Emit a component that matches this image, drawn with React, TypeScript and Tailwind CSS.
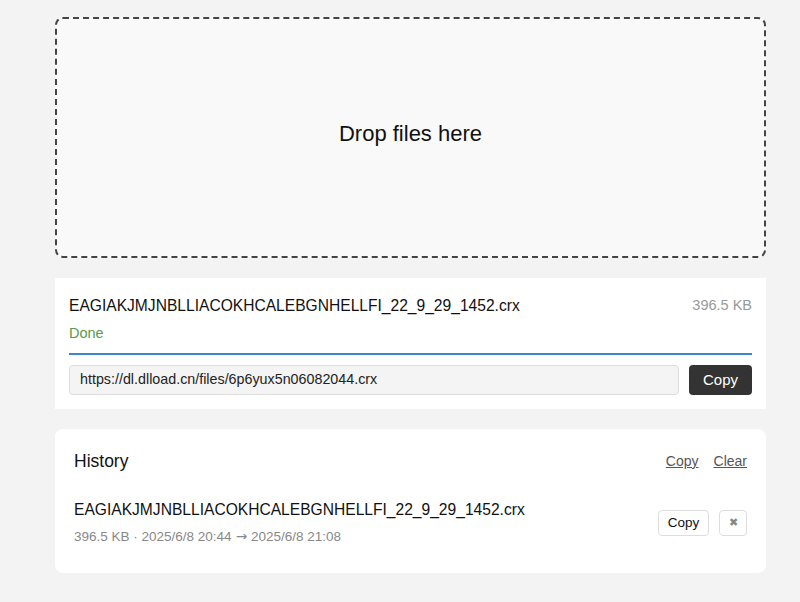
import React from "react";

export default function App() {
  const font = { fontFamily: '"Liberation Sans", Arial, sans-serif' };
  return (
    <div className="min-h-[602px] w-full bg-[#f3f3f3] pt-[17px]" style={font}>
      <div className="ml-[55px] flex w-[711px] flex-col">
        <div className="flex h-[241px] items-center justify-center rounded-[8px] border-2 border-dashed border-[#444] bg-[#f9f9f9] pb-[8px]">
          <span className="text-[22px] text-[#111]">Drop files here</span>
        </div>

        <div className="mt-[20px] flex flex-col bg-white px-[14px] pb-[14px] pt-[16px]">
          <div className="flex items-center justify-between">
            <span className="text-[15.6px] text-[#111]">EAGIAKJMJNBLLIACOKHCALEBGNHELLFI_22_9_29_1452.crx</span>
            <span className="text-[14.5px] text-[#999]">396.5 KB</span>
          </div>
          <div className="mt-[6px] text-[14.5px] text-[#5a9a4a]">Done</div>
          <div className="mt-[8px] h-[2px] w-full bg-[#3a86cf]" />
          <div className="mt-[10px] flex items-center gap-[10px]">
            <div className="flex h-[30px] flex-1 items-center rounded-[4px] border border-[#ddd] bg-[#f4f4f4] px-[10px] text-[14.3px] text-[#222]">
              https://dl.dlload.cn/files/6p6yux5n06082044.crx
            </div>
            <button className="h-[30px] w-[63px] rounded-[4px] bg-[#333] text-[15px] text-white">Copy</button>
          </div>
        </div>

        <div className="mt-[20px] flex flex-col rounded-[8px] bg-white px-[19px] pb-[26px] pt-[19px]">
          <div className="flex items-center justify-between">
            <span className="text-[17.5px] text-[#111]">History</span>
            <div className="flex gap-[15px] text-[14px] text-[#555]">
              <span className="underline">Copy</span>
              <span className="underline">Clear</span>
            </div>
          </div>
          <div className="mt-[24px] flex items-center justify-between">
            <div className="flex flex-col">
              <span className="text-[15.6px] text-[#111]">EAGIAKJMJNBLLIACOKHCALEBGNHELLFI_22_9_29_1452.crx</span>
              <span className="mt-[4px] text-[13.5px] text-[#888]">
                396.5 KB · 2025/6/8 20:44
                <span style={{ fontFamily: '"DejaVu Sans", sans-serif' }} className="mx-[4px] text-[13.5px]">→</span>
                2025/6/8 21:08
              </span>
            </div>
            <div className="flex gap-[10px]">
              <button className="h-[26px] w-[51px] rounded-[4px] border border-[#ddd] bg-white text-[13.5px] text-[#111]">Copy</button>
              <button className="h-[26px] w-[28px] rounded-[4px] border border-[#ddd] bg-white text-[11px] text-[#888]">✖</button>
            </div>
          </div>
        </div>
      </div>
    </div>
  );
}
